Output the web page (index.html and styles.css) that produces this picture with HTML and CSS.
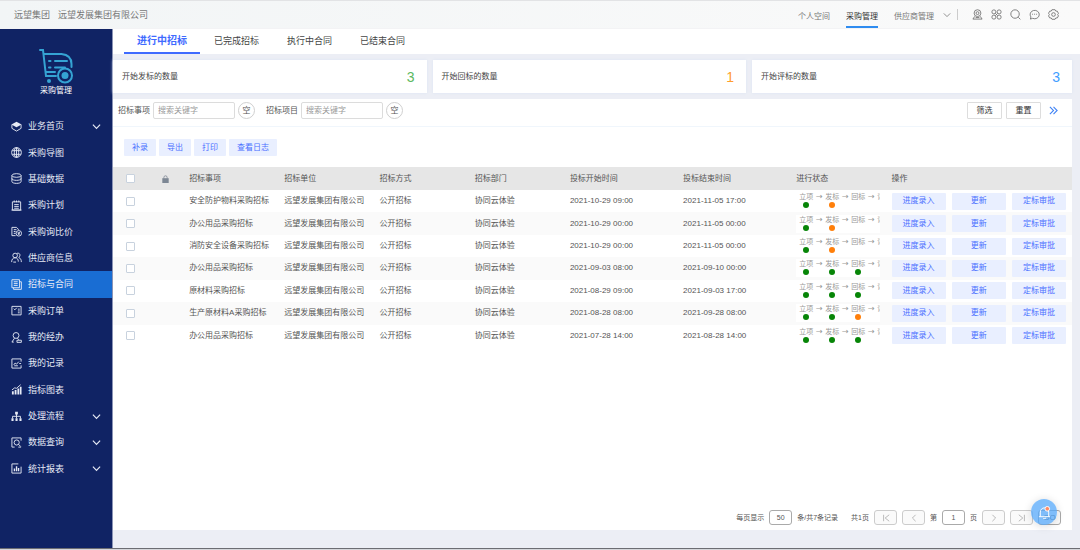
FILE: index.html
```html
<!DOCTYPE html>
<html lang="zh-CN">
<head>
    <meta charset="UTF-8">
    <meta name="viewport" content="width=device-width, initial-scale=1.0">
    <title>采购管理</title>
    <link rel="stylesheet" href="styles.css">
</head>
<body>
    <header class="topbar">
        <div class="company"><span>远望集团</span><span>远望发展集团有限公司</span></div>
        <nav class="topnav">
            <a href="#">个人空间</a>
            <a href="#" class="active">采购管理</a>
            <a href="#">供应商管理</a>
        </nav>
        <button class="icon-btn more" aria-label="更多"><svg viewBox="0 0 10 10"><path d="M1 3l4 4 4-4"/></svg></button>
        <div class="tools">
            <button class="icon-btn" aria-label="组织"><svg viewBox="0 0 12 12"><circle cx="6" cy="4.5" r="3.7"/><circle cx="6" cy="4.5" r="1.6"/><path d="M3 8L1 11h10L9 8M4 9.300h4"/></svg></button>
            <button class="icon-btn" aria-label="应用"><svg viewBox="0 0 12 12"><rect x="1" y="1" width="4.300" height="4.300" rx="2"/><rect x="6.700" y="1" width="4.300" height="4.300" rx="2"/><rect x="1" y="6.700" width="4.300" height="4.300" rx="2"/><rect x="6.700" y="6.700" width="4.300" height="4.300" rx="2"/><path d="M4.800 4.800l2.400 2.400M7.200 4.800L4.800 7.200"/></svg></button>
            <button class="icon-btn" aria-label="搜索"><svg viewBox="0 0 12 12"><circle cx="5.500" cy="5.500" r="4.600"/><path d="M9 9l2.300 2.300"/></svg></button>
            <button class="icon-btn" aria-label="消息"><svg viewBox="0 0 12 12"><path d="M1.500 11l.6-2.300A5 4.600 0 1 1 4 10.200zM3.400 5.700h1M5.600 5.700h1M7.800 5.700h1"/></svg></button>
            <button class="icon-btn" aria-label="设置"><svg viewBox="0 0 12 12"><path d="M4.300.8h3.400l.8 1.500 1.700.1 1.200 2.500L10.500 6l.9 1.500-1.200 2.200-1.700.1-.8 1.400H4.300l-.8-1.400-1.700-.1L.6 7.500 1.500 6 .6 4.700l1.200-2.300 1.700-.1z"/><circle cx="6" cy="6" r="2"/></svg></button>
        </div>
    </header>

    <div class="layout">
        <aside class="sidebar">
            <div class="brand">
                <svg viewBox="0 0 36 36">
                    <path d="M2 2h3l3 26h10M5.500 6h18q10 1 10 10v3M11 13h1.500M17 13h12M11 19.500h1.500M17 19.500h10M8 24h9"/>
                    <circle cx="27" cy="27.500" r="7"/>
                    <circle class="dot" cx="27" cy="27.500" r="3.500"/>
                    <circle class="dot" cx="11" cy="33" r="2"/>
                </svg>
                <span>采购管理</span>
            </div>
            <nav class="menu">
                <a href="#"><svg viewBox="0 0 12 12"><path class="fill" d="M6 .8l5.500 3-5.500 3-5.500-3z"/><path d="M1 4v4l5 3 5-3V4"/></svg><span>业务首页</span><svg class="arrow" viewBox="0 0 10 10"><path d="M1 3l4 4 4-4"/></svg></a>
                <a href="#"><svg viewBox="0 0 12 12"><circle cx="6" cy="6" r="5.300"/><ellipse cx="6" cy="6" rx="2.400" ry="5.300"/><path d="M6 .7v10.600M1.300 4h9.400M1.300 8h9.400"/></svg><span>采购导图</span></a>
                <a href="#"><svg viewBox="0 0 12 12"><ellipse cx="6" cy="2.700" rx="5" ry="2"/><path d="M1 2.700v6.600c0 2.700 10 2.700 10 0V2.700M1 6c0 2.700 10 2.700 10 0"/></svg><span>基础数据</span></a>
                <a href="#"><svg viewBox="0 0 12 12"><path d="M1.500 2h9v9h-9zM3.500.5v2M6 .5v2M8.500.5v2M3.500 5h5M3.500 7h5M3.500 9h5M.5 11h11"/></svg><span>采购计划</span></a>
                <a href="#"><svg viewBox="0 0 12 12"><path d="M5 10.500H1v-9h5l2 2v1M3 4h3M3 6h2M3 8h2"/><circle cx="8.500" cy="8" r="3"/><path d="M7.300 6.500l1.200 1.300 1.200-1.300M8.500 7.800v2M7.300 8.500h2.400"/></svg><span>采购询比价</span></a>
                <a href="#"><svg viewBox="0 0 12 12"><circle cx="4.500" cy="3.800" r="2.500"/><path d="M.7 11c0-3 1.500-4.700 3.800-4.700S8 8 8 10.500M6.500 1.500c3-1 4.500 2 2 4.500 1.800.8 2.800 2.400 2.800 5M2.500 11h3"/></svg><span>供应商信息</span></a>
                <a href="#" class="active"><svg viewBox="0 0 12 12"><path d="M9.500 3h1.800v8.300H2.800V9.500"/><path d="M1 .8h8.300v8.700H1zM3 3h4.300M3 5h4.300M3 7h4.300"/></svg><span>招标与合同</span></a>
                <a href="#"><svg viewBox="0 0 12 12"><path d="M1 1.500h10v9.300H1zM3 4l1.200 1.300L6.300 3M7.500 4.500h2M7.500 6.500h2M7.500 8.500h2"/></svg><span>采购订单</span></a>
                <a href="#"><svg viewBox="0 0 12 12"><circle cx="5.500" cy="3.800" r="3.200"/><path d="M3.800 6.800L1 11M7 6.800l1.500 1.700M1 11h2M6.500 9h4.800v2.300H6.500z"/></svg><span>我的经办</span></a>
                <a href="#"><svg viewBox="0 0 12 12"><path d="M11 4V1H1v10h10V8M3 7.500l1.500-2 1.500 1.200L8.500 4M3.500 8.500h4M9 6h2"/></svg><span>我的记录</span></a>
                <a href="#"><svg viewBox="0 0 12 12"><path class="fill" d="M1 8h2v3.500H1zM4 6.500h2v5H4zM7 5h2v6.500H7zM9.700 3h1.800v8.500H9.700z"/><path d="M1 6.500l3-2.300 2 .5L10.500.8"/></svg><span>指标图表</span></a>
                <a href="#"><svg viewBox="0 0 12 12"><path class="fill" d="M4.500.8h3v3h-3zM.5 8h2.300v3H.5zM4.900 8h2.300v3H4.900zM9.200 8h2.300v3H9.200z"/><path d="M6 3v5M1.700 8V5.800h8.600V8"/></svg><span>处理流程</span><svg class="arrow" viewBox="0 0 10 10"><path d="M1 3l4 4 4-4"/></svg></a>
                <a href="#"><svg viewBox="0 0 12 12"><path d="M11 4V1H1v10h3M8 11h3"/><circle cx="6.200" cy="6" r="2.800"/><path d="M8.200 8l2.300 2.300"/></svg><span>数据查询</span><svg class="arrow" viewBox="0 0 10 10"><path d="M1 3l4 4 4-4"/></svg></a>
                <a href="#"><svg viewBox="0 0 12 12"><path d="M8 1H1v10h10V4"/><path class="fill" d="M3 6h1.500v3H3zM5.300 3.500h1.500V9H5.300zM7.500 5.500H9V9H7.500z"/></svg><span>统计报表</span><svg class="arrow" viewBox="0 0 10 10"><path d="M1 3l4 4 4-4"/></svg></a>
            </nav>
        </aside>

        <main class="content">
            <nav class="tabs">
                <a href="#" class="active">进行中招标</a>
                <a href="#">已完成招标</a>
                <a href="#">执行中合同</a>
                <a href="#">已结束合同</a>
            </nav>

            <section class="cards">
                <div class="card"><span>开始发标的数量</span><b class="num green">3</b></div>
                <div class="card"><span>开始回标的数量</span><b class="num orange">1</b></div>
                <div class="card"><span>开始评标的数量</span><b class="num blue">3</b></div>
            </section>

            <section class="panel">
                <form class="filter">
                    <div class="field">
                        <label for="item">招标事项</label>
                        <input type="text" id="item" placeholder="搜索关键字">
                        <button type="button" class="empty">空</button>
                    </div>
                    <div class="field">
                        <label for="project">招标项目</label>
                        <input type="text" id="project" placeholder="搜索关键字">
                        <button type="button" class="empty">空</button>
                    </div>
                    <div class="filter-actions">
                        <button type="button" class="plain">筛选</button>
                        <button type="reset" class="plain">重置</button>
                        <button type="button" class="expand" aria-label="展开"><svg viewBox="0 0 10 10"><path d="M1 1l4 4-4 4M5 1l4 4-4 4"/></svg></button>
                    </div>
                </form>

                <div class="toolbar">
                    <button class="soft">补录</button>
                    <button class="soft">导出</button>
                    <button class="soft">打印</button>
                    <button class="soft">查看日志</button>
                </div>

                <table class="list">
                    <colgroup>
                        <col class="c-check"><col class="c-check"><col class="c-text"><col class="c-text"><col class="c-text"><col class="c-text"><col class="c-time"><col class="c-time"><col class="c-text"><col class="c-ops">
                    </colgroup>
                    <thead>
                        <tr>
                            <th class="check"><input type="checkbox" aria-label="全选"></th>
                            <th class="check"><svg class="lock" viewBox="0 0 8 10"><path class="body" d="M0 4h8v6H0z"/><path class="bar" d="M2 4.500V3a2 2 0 0 1 4 0v1.500"/></svg></th>
                            <th>招标事项</th>
                            <th>招标单位</th>
                            <th>招标方式</th>
                            <th>招标部门</th>
                            <th>投标开始时间</th>
                            <th>投标结束时间</th>
                            <th>进行状态</th>
                            <th>操作</th>
                        </tr>
                    </thead>
                    <tbody id="rows"></tbody>
                </table>

                <div class="pager">
                    <label for="size">每页显示</label>
                    <input type="text" id="size" value="50">
                    <span class="total">条/共7条记录</span>
                    <span>共1页</span>
                    <button aria-label="首页"><svg viewBox="0 0 10 10"><path d="M2 1v8M9 1L4 5l5 4"/></svg></button>
                    <button aria-label="上一页"><svg viewBox="0 0 10 10"><path d="M7 1L3 5l4 4"/></svg></button>
                    <label for="page">第</label>
                    <input type="text" id="page" value="1">
                    <span>页</span>
                    <button aria-label="下一页"><svg viewBox="0 0 10 10"><path d="M3 1l4 4-4 4"/></svg></button>
                    <button aria-label="末页"><svg viewBox="0 0 10 10"><path d="M8 1v8M1 1l5 4-5 4"/></svg></button>
                    <button class="go">GO</button>
                </div>
            </section>
        </main>
    </div>

    <button class="bell" aria-label="通知">
        <svg viewBox="0 0 14 14"><path d="M1 11.500h12M2.500 11.500V6.500a4.500 4.500 0 0 1 9 0v5M5.500 13.300h3"/><circle cx="10" cy="3" r="2.500"/></svg>
    </button>

    <script src="app.js"></script>
</body>
</html>
```

FILE: styles.css
```css
* {
    box-sizing: border-box;
}

html {
    background-color: #d5d6da;
}

body {
    margin: 0;
    height: calc(100vh - 1px);
    display: flex;
    flex-direction: column;
    font-family: "Liberation Sans", "Noto Sans CJK SC", sans-serif;
    font-size: 8px;
    line-height: 12px;
    color: #555;
    background-color: #eceef5;
    border-top: 1px solid #e2e3e5;
    border-bottom: 1px solid #6c6d73;
}

a {
    color: inherit;
    text-decoration: none;
}

button,
input {
    font: inherit;
    color: inherit;
    margin: 0;
    padding: 0;
}

button {
    cursor: pointer;
}

svg {
    display: block;
    fill: none;
    stroke: currentColor;
    stroke-width: 1;
}

svg .fill {
    fill: currentColor;
    stroke: none;
}

/* barra superior */
.topbar {
    display: flex;
    align-items: center;
    flex: none;
    height: 28px;
    padding: 0 21px 0 14px;
    background: linear-gradient(90deg, #f2f5f6, #fafafa);
    border-bottom: 1px solid #f3f3f5;
    color: #777;
}

.company {
    display: flex;
    gap: 8px;
    font-size: 9px;
}

.topnav {
    display: flex;
    gap: 16px;
    align-self: stretch;
    margin-left: auto;
}

.topnav a {
    padding-top: 10px;
    border-bottom: 2px solid transparent;
}

.topnav .active {
    color: #333;
    border-color: #2f8cf0;
}

.icon-btn {
    border: none;
    background: none;
}

.icon-btn svg {
    width: 11px;
    height: 11px;
}

.more {
    margin-left: 9px;
}

.more svg {
    width: 8px;
    height: 8px;
}

.tools {
    display: flex;
    gap: 8px;
    margin-left: 6px;
    padding-left: 14px;
    border-left: 1px solid #ccc;
}

.layout {
    display: flex;
    flex: 1;
    min-height: 0;
}

/* menu lateral */
.sidebar {
    display: flex;
    flex-direction: column;
    flex: none;
    width: 113px;
    background-color: #102364;
    border-right: 1px solid #8b94b6;
    color: #e6eaf5;
}

.brand {
    display: flex;
    flex-direction: column;
    align-items: center;
    height: 84px;
    padding-top: 19px;
    color: #fff;
}

.brand svg {
    width: 36px;
    height: 36px;
    margin-bottom: 1px;
    color: #35a3d3;
    stroke-width: 2;
    stroke-linecap: round;
}

.brand .dot {
    fill: currentColor;
    stroke: none;
}

.menu {
    display: grid;
    flex: 1;
    grid-auto-rows: 1fr;
    padding-bottom: 66px;
    font-size: 9px;
}

.menu a {
    display: flex;
    align-items: center;
    gap: 6px;
    padding: 0 11px;
}

.menu svg {
    width: 11px;
    height: 11px;
}

.menu .arrow {
    width: 9px;
    height: 9px;
    margin-left: auto;
    stroke-width: 1.3;
}

.menu .active {
    background-color: #196dd3;
}

/* contenido */
.content {
    display: flex;
    flex-direction: column;
    flex: 1;
    min-width: 0;
}

.tabs {
    display: flex;
    height: 25px;
    padding-left: 11px;
    background-color: #fff;
    font-size: 9px;
    color: #444;
}

.tabs a {
    padding: 6px 14px;
}

.tabs .active {
    padding: 6px 13px;
    font-size: 10px;
    font-weight: bold;
    color: #3f6bff;
    border-bottom: 2px solid #3f6bff;
}

.cards {
    display: grid;
    grid-template-columns: 1fr 1fr 320px;
    gap: 6px;
    margin: 6px 8px 6px 0;
}

.card {
    display: flex;
    align-items: center;
    justify-content: space-between;
    height: 33px;
    padding: 0 12px 0 9px;
    background-color: #fff;
    box-shadow: 0 0 3px #dde5f3;
    color: #444;
}

.num {
    font-size: 14px;
    font-weight: normal;
}

.green {
    color: #5cb860;
}

.orange {
    color: #ff9d2e;
}

.blue {
    color: #409eff;
}

.panel {
    display: flex;
    flex-direction: column;
    flex: 1;
    margin: 0 8px 18px 0;
    background-color: #fff;
}

.filter {
    display: flex;
    align-items: center;
    gap: 11px;
    height: 28px;
    padding: 0 14px 4px 5px;
    border-bottom: 1px solid #f0f6fc;
}

.field {
    display: flex;
    align-items: center;
    gap: 3px;
}

.field input {
    width: 82px;
    height: 17px;
    padding: 0 4px;
    border: 1px solid #dcdcdc;
    border-radius: 2px;
}

.field input::placeholder {
    color: #999;
}

.empty {
    width: 17px;
    height: 17px;
    border: 1px solid #d0d0d0;
    border-radius: 50%;
    background-color: #fff;
}

.filter-actions {
    display: flex;
    align-items: center;
    gap: 4px;
    margin-left: auto;
}

.plain {
    width: 35px;
    height: 17px;
    border: 1px solid #ddd;
    border-radius: 1px;
    background-color: #fff;
    color: #333;
}

.expand {
    margin-left: 4px;
    border: none;
    background: none;
    color: #3f82f5;
}

.expand svg {
    width: 9px;
    height: 9px;
    stroke-width: 1.2;
}

.toolbar {
    display: flex;
    gap: 3px;
    padding: 12px 11px 11px;
}

.soft {
    height: 17px;
    padding: 0 8px;
    border: none;
    border-radius: 1px;
    background-color: #e9efff;
    color: #4a70ff;
}

.list {
    width: 100%;
    height: 180px;
    table-layout: fixed;
    border-collapse: collapse;
}

.c-check {
    width: 35px;
}

.c-text {
    width: 95px;
}

.c-time {
    width: 113px;
}

.c-ops {
    width: 186px;
}

.list th,
.list td {
    padding: 0 6px;
    font-weight: normal;
    text-align: left;
    white-space: nowrap;
}

.list th {
    height: 23px;
}

.list thead tr {
    background-color: #e6e6e6;
}

.list tbody tr:nth-child(even) {
    background-color: #fafafa;
}

.list .check {
    padding: 0;
    text-align: center;
}

.list input {
    appearance: none;
    display: block;
    width: 9px;
    height: 9px;
    margin: 0 auto;
    border: 1px solid #c8d2de;
    border-radius: 1px;
    background-color: #fff;
}

.list input:checked {
    background-color: #409eff;
}

.lock {
    width: 7px;
    height: 8px;
    margin: 0 auto;
    color: #7d8794;
}

.lock .body {
    fill: currentColor;
    stroke: none;
}

/* estado: pasos con su punto de color */
.steps {
    display: flex;
    width: 84px;
    height: 18px;
    padding-left: 3px;
    overflow: hidden;
    background-color: #fff;
    font-size: 7px;
    line-height: 9px;
    color: #999;
}

.step {
    flex: none;
    width: 14px;
}

.step::after {
    content: "";
    display: block;
    width: 6px;
    height: 6px;
    margin: 1px auto 0;
    border-radius: 50%;
}

.step.done::after {
    background-color: #078507;
}

.step.doing::after {
    background-color: #ff7f0a;
}

.to {
    flex: none;
    width: 12px;
    font-family: "DejaVu Sans", sans-serif;
    font-size: 8px;
    text-align: center;
}

.ops {
    display: grid;
    grid-template-columns: repeat(3, 1fr);
    gap: 6px;
}

.ops .soft {
    padding: 0;
}

.pager {
    display: flex;
    align-items: center;
    justify-content: flex-end;
    gap: 5px;
    margin-top: auto;
    padding: 0 11px 5px;
    font-size: 7px;
}

.pager .total {
    margin-right: 8px;
}

.pager input,
.pager button {
    width: 23px;
    height: 15px;
    border: 1px solid #aaa;
    border-radius: 3px;
    background-color: #fff;
    text-align: center;
}

.pager button {
    border-color: #ccc;
    background-color: #fafafa;
    color: #aaa;
}

.pager .go {
    border-color: #aaa;
    font-size: 8px;
    color: #555;
}

.pager svg {
    width: 8px;
    height: 8px;
    margin: 0 auto;
}

.bell {
    position: fixed;
    right: 23px;
    bottom: 25px;
    width: 26px;
    height: 26px;
    border: none;
    border-radius: 50%;
    background-color: rgba(85, 168, 250, 0.75);
    box-shadow: 0 1px 8px rgba(0, 0, 0, 0.15);
    color: #fff;
}

.bell svg {
    width: 13px;
    height: 13px;
    margin: 0 auto;
}

.bell circle {
    fill: #ff8a65;
}
```

FILE: app.js
```js
const filas = [
    ['安全防护物料采购招标', '2021-10-29 09:00', '2021-11-05 17:00', ['done', 'doing', '']],
    ['办公用品采购招标', '2021-10-29 00:00', '2021-11-05 00:00', ['done', 'doing', '']],
    ['消防安全设备采购招标', '2021-10-29 00:00', '2021-11-05 00:00', ['done', 'doing', '']],
    ['办公用品采购招标', '2021-09-03 08:00', '2021-09-10 00:00', ['done', 'done', 'done']],
    ['原材料采购招标', '2021-08-29 09:00', '2021-09-03 17:00', ['done', 'done', 'done']],
    ['生产原材料A采购招标', '2021-08-28 08:00', '2021-09-28 08:00', ['done', 'done', 'doing']],
    ['办公用品采购招标', '2021-07-28 14:00', '2021-08-28 14:00', ['done', 'done', 'done']]
];

const pasos = ['立项', '发标', '回标', '评标'];

document.getElementById('rows').innerHTML = filas.map(([nombre, inicio, fin, estado]) => `
    <tr>
        <td class="check"><input type="checkbox" aria-label="${nombre}"></td>
        <td></td>
        <td>${nombre}</td>
        <td>远望发展集团有限公司</td>
        <td>公开招标</td>
        <td>协同云体验</td>
        <td>${inicio}</td>
        <td>${fin}</td>
        <td><div class="steps">${pasos.map((p, i) => `<span class="step ${estado[i] || ''}">${p}</span>`).join('<span class="to">→</span>')}</div></td>
        <td><div class="ops">
            <button class="soft">进度录入</button>
            <button class="soft">更新</button>
            <button class="soft">定标审批</button>
        </div></td>
    </tr>`).join('');
```
